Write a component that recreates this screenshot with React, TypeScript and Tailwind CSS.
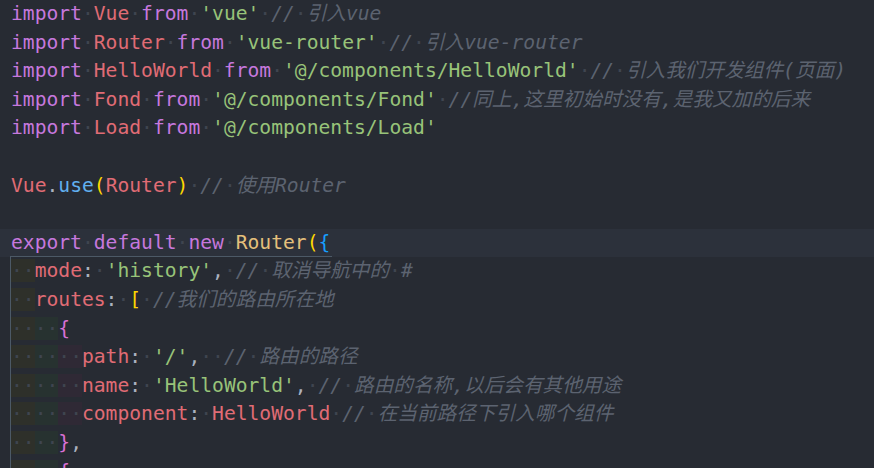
type Tok = [string, string];

const K = 'text-[#c678dd]';
const R = 'text-[#e06c75]';
const G = 'text-[#98c379]';
const C = 'text-[#5c6370] italic';
const P = 'text-[#abb2bf]';
const B = 'text-[#61afef]';
const Y = 'text-[#e5c07b]';
const GOLD = 'text-[#ffd700]';
const SKY = 'text-[#179fff]';
const ORCHID = 'text-[#da70d6]';

const lines: Tok[][] = [
  [['import', K], [' ', ''], ['Vue', R], [' ', ''], ['from', K], [' ', ''], ["'vue'", G], [' ', ''], ['// 引入vue', C]],
  [['import', K], [' ', ''], ['Router', R], [' ', ''], ['from', K], [' ', ''], ["'vue-router'", G], [' ', ''], ['// 引入vue-router', C]],
  [['import', K], [' ', ''], ['HelloWorld', R], [' ', ''], ['from', K], [' ', ''], ["'@/components/HelloWorld'", G], [' ', ''], ['// 引入我们开发组件(页面)', C]],
  [['import', K], [' ', ''], ['Fond', R], [' ', ''], ['from', K], [' ', ''], ["'@/components/Fond'", G], [' ', ''], ['//同上,这里初始时没有,是我又加的后来', C]],
  [['import', K], [' ', ''], ['Load', R], [' ', ''], ['from', K], [' ', ''], ["'@/components/Load'", G]],
  [],
  [['Vue', R], ['.', P], ['use', B], ['(', GOLD], ['Router', R], [')', GOLD], [' ', ''], ['// 使用Router', C]],
  [],
];

const inner: Tok[][] = [
  [['mode', R], [':', P], [' ', ''], ["'history'", G], [',', P], [' ', ''], ['// 取消导航中的 #', C]],
  [['routes', R], [':', P], [' ', ''], ['[', GOLD], [' ', ''], ['//我们的路由所在地', C]],
  [['{', ORCHID]],
  [['path', R], [':', P], [' ', ''], ["'/'", G], [',', P], ['  ', ''], ['// 路由的路径', C]],
  [['name', R], [':', P], [' ', ''], ["'HelloWorld'", G], [',', P], [' ', ''], ['// 路由的名称,以后会有其他用途', C]],
  [['component', R], [':', P], [' ', ''], ['HelloWorld', R], [' ', ''], ['// 在当前路径下引入哪个组件', C]],
  [['}', ORCHID], [',', P]],
  [['{', ORCHID]],
];

// indent level per inner line (each level = 2 spaces)
const depth = [1, 1, 2, 3, 3, 3, 2, 2];
const levelBg = ['bg-[#2e302a]', 'bg-[#273230]', 'bg-[#2f2935]'];

function Dot() {
  return <span className="text-[#3f4550] not-italic">·</span>;
}

function Tokens({ toks }: { toks: Tok[] }) {
  return (
    <>
      {toks.map(([text, cls], i) => (
        <span key={i} className={cls}>
          {text.split(/( )/).map((part, j) =>
            part === ' ' ? <Dot key={j} /> : part ? <span key={j}>{part}</span> : null,
          )}
        </span>
      ))}
    </>
  );
}

function Indent({ level }: { level: number }) {
  return (
    <>
      {Array.from({ length: level }).map((_, i) => (
        <span key={i} className={levelBg[i]}>
          <Dot />
          <Dot />
        </span>
      ))}
    </>
  );
}

export default function App() {
  return (
    <div
      className="h-[468px] w-[874px] overflow-hidden bg-[#272b33] text-[19.65px] leading-[28.6px] whitespace-pre"
      style={{ fontFamily: '"DejaVu Sans Mono", "Noto Sans CJK SC", monospace' }}
    >
      {lines.map((toks, i) => (
        <div key={i} className="h-[28.6px] pl-[11px]">
          <Tokens toks={toks} />
        </div>
      ))}

      <div className="h-[28.6px] bg-[#2c313b]">
        <div className="ml-[10px] box-border inline-block h-[28.6px] border-b border-[#4c5966] pl-px pr-[2px]">
          <Tokens
            toks={[
              ['export', K],
              [' ', ''],
              ['default', K],
              [' ', ''],
              ['new', K],
              [' ', ''],
              ['Router', Y],
              ['(', GOLD],
              ['{', SKY],
            ]}
          />
        </div>
      </div>

      <div className="ml-[10px] border-l border-[#4c5966]">
        {inner.map((toks, i) => (
          <div key={i} className="h-[28.6px]">
            <Indent level={depth[i]} />
            <Tokens toks={toks} />
          </div>
        ))}
      </div>
    </div>
  );
}
